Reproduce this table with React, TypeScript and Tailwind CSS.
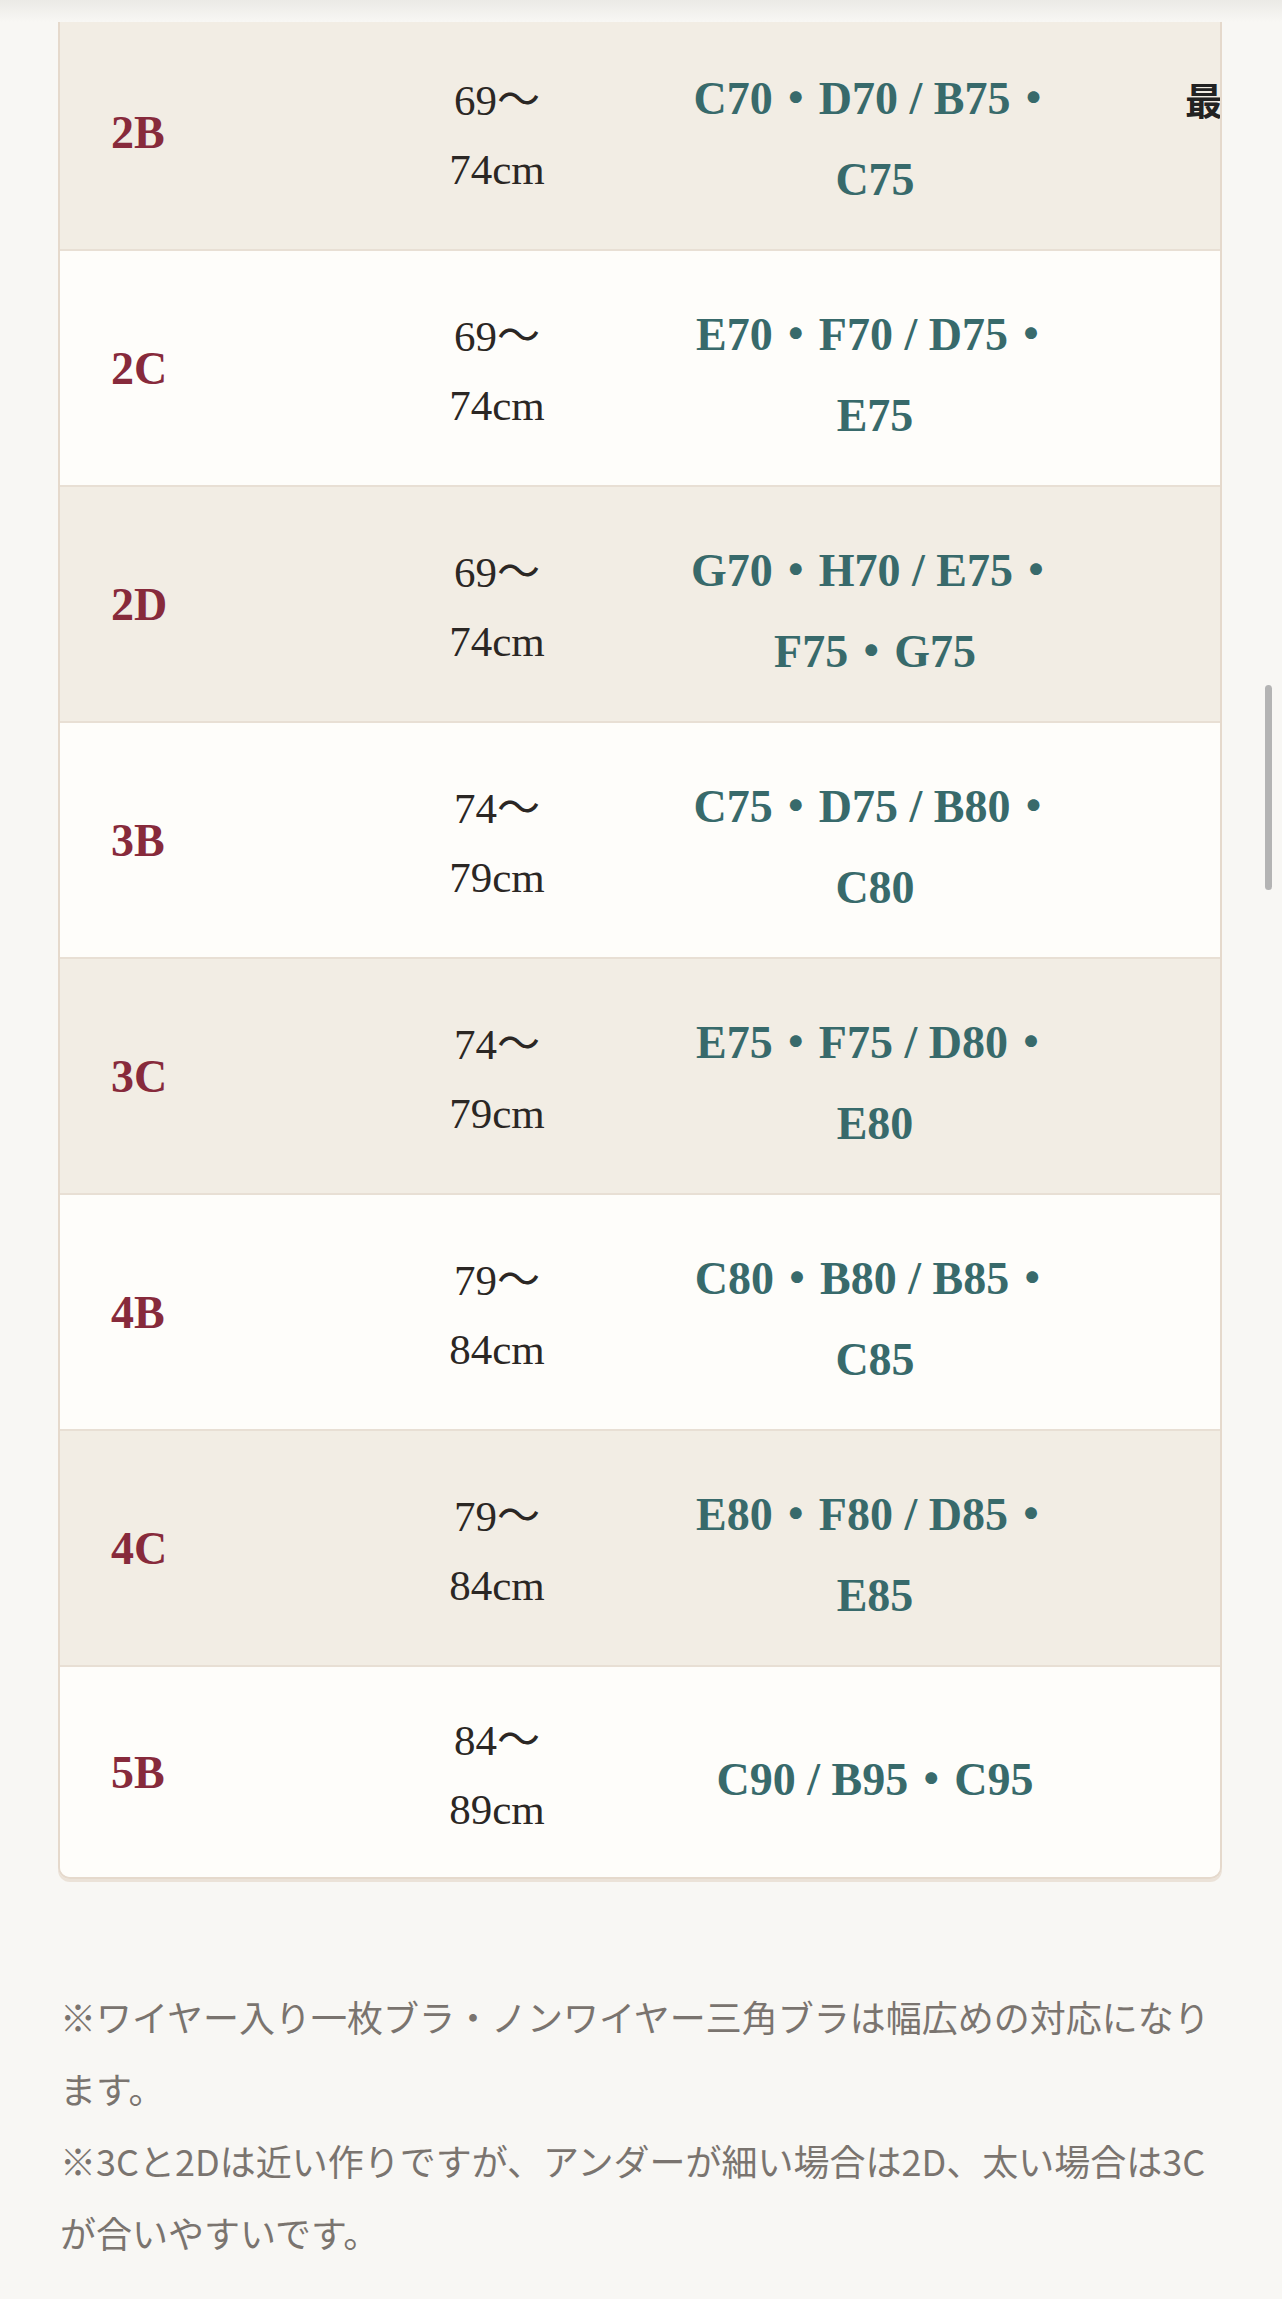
const rows = [
  { size: "2B", under: ["69〜", "74cm"], cups: "C70・D70 / B75・C75", note: "最も人気のサイズ" },
  { size: "2C", under: ["69〜", "74cm"], cups: "E70・F70 / D75・E75", note: "" },
  { size: "2D", under: ["69〜", "74cm"], cups: "G70・H70 / E75・F75・G75", note: "" },
  { size: "3B", under: ["74〜", "79cm"], cups: "C75・D75 / B80・C80", note: "" },
  { size: "3C", under: ["74〜", "79cm"], cups: "E75・F75 / D80・E80", note: "" },
  { size: "4B", under: ["79〜", "84cm"], cups: "C80・B80 / B85・C85", note: "" },
  { size: "4C", under: ["79〜", "84cm"], cups: "E80・F80 / D85・E85", note: "" },
  { size: "5B", under: ["84〜", "89cm"], cups: "C90 / B95・C95", note: "" },
];

export default function App() {
  return (
    <div className="relative min-h-[2299px] bg-[#f8f7f4] font-['Liberation_Serif','Noto_Sans_CJK_JP',serif]">
      {/* shadow of the sticky header above */}
      <div className="h-[22px] bg-gradient-to-b from-[#ebeae6] to-[#f8f7f4]" />

      <div className="pl-[58px] pr-[60px]">
        <div className="overflow-hidden rounded-b-[12px] border-2 border-t-0 border-[#e5d9cc] shadow-[0_3px_0_#ebe2d8]">
          <div className="w-max">
            {rows.map((row, i) => {
              const last = i === rows.length - 1;
              return (
                <div
                  key={row.size}
                  className={`grid grid-cols-[321px_232px_524px_360px] items-center ${
                    i === 0 ? "pt-[22px] pb-[29px]" : last ? "py-[33px]" : "py-[29px]"
                  } ${i % 2 === 0 ? "bg-[#f2ede4]" : "bg-[#fefdfa]"} ${
                    last ? "" : "border-b-2 border-[#e8dfd4]"
                  }`}
                >
                  <div className="pl-[51px] text-[46px] font-bold leading-[81px] text-[#872a3b]">{row.size}</div>
                  <div className="pt-[6px] text-center text-[43px] leading-[69px] text-[#2b2724]">
                    {row.under[0]}
                    <br />
                    {row.under[1]}
                  </div>
                  <div className="px-[48px] pt-[14px] text-center text-[46px] font-bold leading-[81px] text-[#386a6b]">
                    {row.cups}
                  </div>
                  <div className="self-start whitespace-nowrap pl-[48px] pt-[14px] font-['Noto_Sans_CJK_JP',sans-serif] text-[38px] font-bold leading-[81px] text-[#222]">
                    {row.note}
                  </div>
                </div>
              );
            })}
          </div>
        </div>
      </div>

      <div className="mt-[101px] pl-[60px] pr-[60px] font-['Noto_Sans_CJK_JP',sans-serif] text-[36px] leading-[72px] text-[#7a746f]">
        <p>※ワイヤー入り一枚ブラ・ノンワイヤー三角ブラは幅広めの対応になります。</p>
        <p>※3Cと2Dは近い作りですが、アンダーが細い場合は2D、太い場合は3Cが合いやすいです。</p>
      </div>

      {/* overlay scrollbar */}
      <div className="absolute left-[1265px] top-[685px] h-[205px] w-[7px] rounded-full bg-[#b4b4b4]" />
    </div>
  );
}
